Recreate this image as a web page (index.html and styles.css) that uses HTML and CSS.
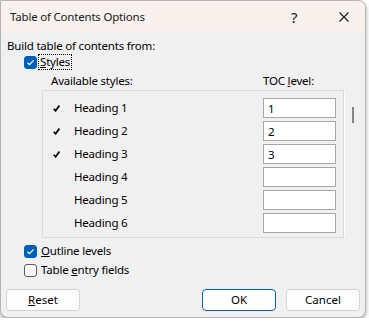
FILE: index.html
```html
<!DOCTYPE html>
<html lang="en">
<head>
    <meta charset="UTF-8"/>
    <title>Table of Contents Options</title>
    <link rel="stylesheet" href="styles.css">
</head>
<body>
<div class="dialog">
    <div class="titlebar">
        <span class="title">Table of Contents Options</span>
        <span class="help">?</span>
        <span class="close">
            <svg width="10" height="10" viewBox="0 0 10 10"><path d="M0.5 0.5L9.5 9.5M9.5 0.5L0.5 9.5" stroke="#1a1a1a" stroke-width="1.1" fill="none"/></svg>
        </span>
    </div>
    <div class="content">
        <div class="group-label">Build table of contents from:</div>
        <div class="check-row styles-row">
            <span class="cb on"><svg width="13" height="13" viewBox="0 0 13 13"><path d="M3.5 6.8L5.5 8.7L9.6 4.4" stroke="#fff" stroke-width="1.2" fill="none"/></svg></span>
            <span class="focus"><u>S</u>tyles</span>
        </div>
        <div class="cols">
            <span class="col-avail">Available styles:</span>
            <span class="col-level">TOC <u>l</u>evel:</span>
        </div>
        <div class="list-wrap">
            <div class="list">
                <div class="row"><span class="mark"><svg width="7" height="7" viewBox="0 0 7 7"><path d="M0.8 3.8L2.6 5.8L6.4 0.6" stroke="#000" stroke-width="1.7" fill="none"/></svg></span><span class="name">Heading 1</span><input class="level" value="1"></div>
                <div class="row"><span class="mark"><svg width="7" height="7" viewBox="0 0 7 7"><path d="M0.8 3.8L2.6 5.8L6.4 0.6" stroke="#000" stroke-width="1.7" fill="none"/></svg></span><span class="name">Heading 2</span><input class="level" value="2"></div>
                <div class="row"><span class="mark"><svg width="7" height="7" viewBox="0 0 7 7"><path d="M0.8 3.8L2.6 5.8L6.4 0.6" stroke="#000" stroke-width="1.7" fill="none"/></svg></span><span class="name">Heading 3</span><input class="level" value="3"></div>
                <div class="row"><span class="mark"></span><span class="name">Heading 4</span><input class="level" value=""></div>
                <div class="row"><span class="mark"></span><span class="name">Heading 5</span><input class="level" value=""></div>
                <div class="row"><span class="mark"></span><span class="name">Heading 6</span><input class="level" value=""></div>
            </div>
            <div class="scroll"><div class="thumb"></div></div>
        </div>
        <div class="check-row outline-row">
            <span class="cb on"><svg width="13" height="13" viewBox="0 0 13 13"><path d="M3.5 6.8L5.5 8.7L9.6 4.4" stroke="#fff" stroke-width="1.2" fill="none"/></svg></span>
            <span class="label"><u>O</u>utline levels</span>
        </div>
        <div class="check-row entry-row">
            <span class="cb"></span>
            <span class="label">Table <u>e</u>ntry fields</span>
        </div>
        <div class="buttons">
            <button class="btn reset"><u>R</u>eset</button>
            <button class="btn ok">OK</button>
            <button class="btn cancel">Cancel</button>
        </div>
    </div>
</div>
</body>
</html>
```

FILE: styles.css
```css
body {
    margin: 0;
    background: #ffffff;
    font-family: "Noto Sans", Arial, sans-serif;
    font-size: 11.5px;
    letter-spacing: -0.2px;
    color: #000;
}

.dialog {
    width: 366px;
    height: 318px;
    box-sizing: border-box;
    border: 1px solid #b4b4b4;
    border-radius: 0 8px 8px 8px;
    background: #f0f0f0;
    overflow: hidden;
    box-shadow: 0 2px 4px rgba(0, 0, 0, 0.35);
}

.titlebar {
    height: 31px;
    background: #f8f1ed;
    display: flex;
    align-items: center;
    padding-left: 9px;
    color: #1a1a1a;
}

.title {
    flex: 1;
}

.help {
    font-size: 15px;
    width: 10px;
    margin-right: 38px;
    margin-top: 1px;
}

.close {
    display: flex;
    width: 10px;
    height: 10px;
    margin-right: 16px;
    margin-top: 1px;
}

.content {
    padding-top: 6px;
    line-height: 16px;
}

.group-label {
    padding-left: 6px;
}

.check-row {
    display: flex;
    align-items: center;
    height: 16px;
    padding-left: 23px;
}

.cb {
    width: 13px;
    height: 13px;
    box-sizing: border-box;
    border: 1px solid #5c5c5c;
    border-radius: 3px;
    background: #fbfbfb;
    margin-right: 4px;
    display: flex;
}

.cb.on {
    background: #005fb8;
    border-color: #005fb8;
}

.cb.on svg {
    margin: -1px;
}

.focus {
    outline: 1px dotted #000;
    line-height: 14px;
    padding: 0 1px;
    margin-left: -2px;
}

.cols {
    display: flex;
    margin-top: 3px;
    height: 16px;
}

.col-avail {
    padding-left: 50px;
    width: 212px;
}

.list-wrap {
    display: flex;
    margin-top: 1px;
    padding-left: 41px;
}

.list {
    width: 302px;
    box-sizing: border-box;
    border: 1px solid #dadada;
    box-shadow: 1px 0 0 #ffffff;
    padding: 7px 0 4px;
    display: grid;
    row-gap: 3px;
}

.row {
    display: grid;
    grid-template-columns: 31px 1fr 73px;
    align-items: center;
    height: 20px;
    padding-right: 7px;
}

.mark {
    padding-left: 10px;
    display: flex;
    align-items: center;
}

.level {
    height: 20px;
    width: 73px;
    box-sizing: border-box;
    border: 1px solid #a6a6a6;
    background: #fff;
    padding: 0 4px;
    font: inherit;
    margin: 0;
}

.scroll {
    padding-left: 8px;
}

.thumb {
    width: 2px;
    height: 16px;
    margin-top: 17px;
    background: #858585;
}

.outline-row {
    margin-top: 5px;
}

.entry-row {
    margin-top: 3px;
}

.buttons {
    display: flex;
    margin-top: 11px;
    padding-left: 5px;
}

.btn {
    width: 74px;
    height: 22px;
    box-sizing: border-box;
    border: 1px solid #d3d3d3;
    border-radius: 4px;
    background: #fdfdfd;
    font: inherit;
    color: #000;
    padding: 0;
}

.ok {
    margin-left: auto;
    border-color: #0067c0;
}

.cancel {
    margin-left: 10px;
    margin-right: 5px;
}
```
